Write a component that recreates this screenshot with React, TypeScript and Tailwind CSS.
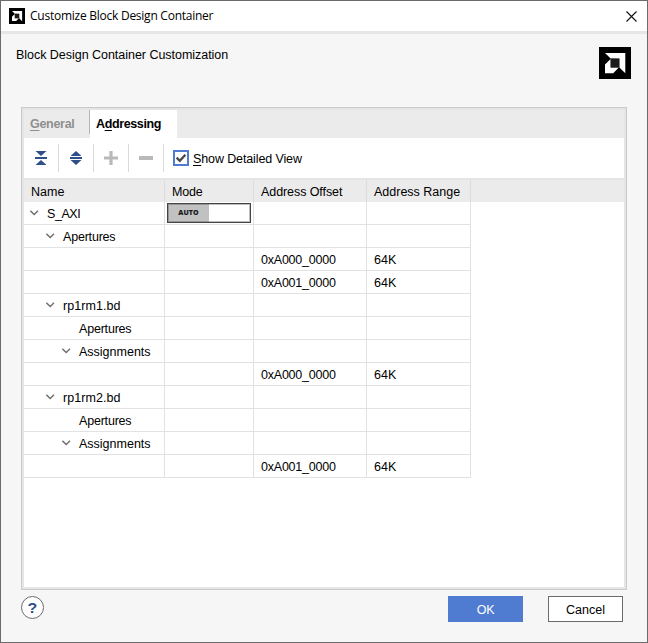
import React from 'react';

type Row = {
  name?: string;
  indent?: string;
  tracking?: string;
  open?: boolean;
  auto?: boolean;
  offset?: string;
  range?: string;
};

const rows: Row[] = [
  { name: 'S_AXI', indent: 'pl-[6px]', tracking: 'tracking-[-0.45px]', open: true, auto: true },
  { name: 'Apertures', indent: 'pl-[22px]', tracking: 'tracking-[-0.2px]', open: true },
  { offset: '0xA000_0000', range: '64K' },
  { offset: '0xA001_0000', range: '64K' },
  { name: 'rp1rm1.bd', indent: 'pl-[22px]', tracking: 'tracking-[0.05px]', open: true },
  { name: 'Apertures', indent: 'pl-[38px]', tracking: 'tracking-[-0.2px]' },
  { name: 'Assignments', indent: 'pl-[38px]', open: true },
  { offset: '0xA000_0000', range: '64K' },
  { name: 'rp1rm2.bd', indent: 'pl-[22px]', tracking: 'tracking-[0.05px]', open: true },
  { name: 'Apertures', indent: 'pl-[38px]', tracking: 'tracking-[-0.2px]' },
  { name: 'Assignments', indent: 'pl-[38px]', open: true },
  { offset: '0xA001_0000', range: '64K' },
];

const headings = [
  { label: 'Name', tracking: '' },
  { label: 'Mode', tracking: 'tracking-[-0.2px]' },
  { label: 'Address Offset', tracking: 'tracking-[-0.08px]' },
  { label: 'Address Range', tracking: '' },
];

const grid = 'grid grid-cols-[141px_89px_113px_104px]';

function Logo({ className }: { className: string }) {
  return (
    <svg viewBox="0 0 32 32" className={className}>
      <rect width="32" height="32" fill="#000" />
      <path d="M6 6H26.3V26.3L20.4 20.4V11.6H11.6Z" fill="#fff" />
      <path d="M6 17.6L11.6 12V20.6H19.8L14.2 26.2H6Z" fill="#fff" />
      <rect x="11.8" y="11.8" width="8.4" height="8.6" fill="#1c1c1c" />
    </svg>
  );
}

function Chevron() {
  return (
    <svg viewBox="0 0 9 6" className="h-[6px] w-[9px]" fill="none" stroke="#707070" strokeWidth="1.4">
      <path d="M0.4 0.8L4.2 4.6L8 0.8" />
    </svg>
  );
}

function Divider() {
  return <div className="h-7 w-px bg-[#d9d9d9]" />;
}

function Tool({ children }: { children: React.ReactNode }) {
  return (
    <div className="flex w-[34px] justify-center">
      <svg viewBox="0 0 14 14" className="h-[14px] w-[14px]">
        {children}
      </svg>
    </div>
  );
}

export default function App() {
  return (
    <div className="flex h-[643px] w-[648px] flex-col border border-[#6b6b6b] bg-[#f6f6f6] font-['Liberation_Sans',Arial,sans-serif] text-[12.5px] leading-[14px] text-black">
      <header className="flex h-[33px] shrink-0 items-center border-b-[3px] border-[#e6e6e6] bg-white pl-2 pr-[10px]">
        <Logo className="h-4 w-4" />
        <span className="ml-[5px] font-['Open_Sans','Noto_Sans',sans-serif] text-[12px] tracking-[-0.25px]">
          Customize Block Design Container
        </span>
        <svg viewBox="0 0 11 11" className="ml-auto h-[11px] w-[11px]" stroke="#111" strokeWidth="1.1">
          <path d="M0.5 0.5L10.5 10.5M10.5 0.5L0.5 10.5" />
        </svg>
      </header>

      <div className="flex h-[73px] shrink-0 justify-between pl-[15px] pr-4 pt-[13px]">
        <h1 className="pt-px tracking-[-0.03px]">Block Design Container Customization</h1>
        <Logo className="h-8 w-8" />
      </div>

      <main className="ml-5 flex h-[483px] w-[606px] shrink-0 flex-col border border-[#cacaca]">
        <div className="flex grow flex-col border-2 border-[#e5e5e5] bg-white">
          <div className="flex h-7 shrink-0 bg-[#ebebeb] font-bold">
            <div className="w-[65px] pl-[6px] pt-[7px] tracking-[-0.3px] text-[#8f8f8f]">
              <span className="underline underline-offset-2">G</span>eneral
            </div>
            <div className="h-6 w-px bg-[#b5b5b5]" />
            <div className="w-[87px] bg-white pl-[6px] pt-[7px] tracking-[-0.38px]">
              A<span className="underline underline-offset-2">d</span>dressing
            </div>
          </div>

          <div className="flex h-10 shrink-0 items-center">
            <Tool>
              <g fill="#2f4f8a">
                <path d="M1.5 0H12.5L7 5ZM1.5 14H12.5L7 9Z" />
                <rect x="1" y="6" width="12" height="2" />
              </g>
            </Tool>
            <Divider />
            <Tool>
              <g fill="#2f4f8a">
                <path d="M1.5 5L7 0L12.5 5ZM1.5 9L7 14L12.5 9Z" />
                <rect x="1" y="6" width="12" height="2" />
              </g>
            </Tool>
            <Divider />
            <Tool>
              <path d="M0 5.4H5.4V0H8.6V5.4H14V8.6H8.6V14H5.4V8.6H0Z" fill="#b9b9b9" />
            </Tool>
            <Divider />
            <Tool>
              <rect x="0" y="5" width="14" height="4" fill="#b9b9b9" />
            </Tool>
            <Divider />
            <label className="ml-[9px] flex items-center">
              <svg viewBox="0 0 16 16" className="h-4 w-4">
                <rect x="1" y="1" width="14" height="14" fill="#fff" stroke="#4f7bd0" strokeWidth="2" />
                <path d="M3.6 7.6L6.8 10.8L12.4 4.8" fill="none" stroke="#4a4a4a" strokeWidth="2.4" />
              </svg>
              <span className="ml-1 pt-px tracking-[-0.12px]">
                <span className="underline underline-offset-2">S</span>how Detailed View
              </span>
            </label>
          </div>

          <div className="h-6 shrink-0 border-t-2 border-[#e5e5e5] bg-[#ebebeb]">
            <div className={`${grid} h-[22px]`}>
              {headings.map((h) => (
                <div key={h.label} className={`border-r border-[#dcdcdc] pl-[7px] pt-[5px] ${h.tracking}`}>
                  {h.label}
                </div>
              ))}
            </div>
          </div>

          {rows.map((r, i) => (
            <div key={i} className={`${grid} h-[23px] shrink-0 *:border-b *:border-r *:border-[#e2e2e2]`}>
              <div className={`flex items-center ${r.indent ?? ''}`}>
                <span className="w-[17px]">{r.open && <Chevron />}</span>
                <span className={`pt-px ${r.tracking ?? ''}`}>{r.name}</span>
              </div>
              <div className="pl-[2px] pt-px">
                {r.auto && (
                  <div className="flex h-5 w-[84px] border-[1.5px] border-[#444] bg-white outline-1 -outline-offset-2 outline-[#444]/35">
                    <div className="flex w-[41px] items-center justify-center bg-[#c1c1c1] font-['Open_Sans',sans-serif] text-[7px] font-extrabold tracking-[0.1px] text-[#1a1a1a]">
                      AUTO
                    </div>
                  </div>
                )}
              </div>
              <div className="flex items-center pl-[7px] pt-px tracking-[-0.22px]">{r.offset}</div>
              <div className="flex items-center pl-[7px] pt-px">{r.range}</div>
            </div>
          ))}
        </div>
      </main>

      <footer className="flex items-start pl-5 pr-6 pt-[6px]">
        <button className="flex h-[23px] w-[23px] items-center justify-center rounded-full border border-[#6b6b6b] bg-white text-[#2f4f8a]">
          <span className="scale-x-110 text-[14.5px] font-bold">?</span>
        </button>
        <button className="ml-auto h-[26px] w-[75px] bg-[#4f7bd0] pt-px tracking-[-0.4px] text-white">OK</button>
        <button className="ml-[25px] h-[26px] w-[75px] border border-[#6b6b6b] bg-white pt-px">Cancel</button>
      </footer>
    </div>
  );
}
